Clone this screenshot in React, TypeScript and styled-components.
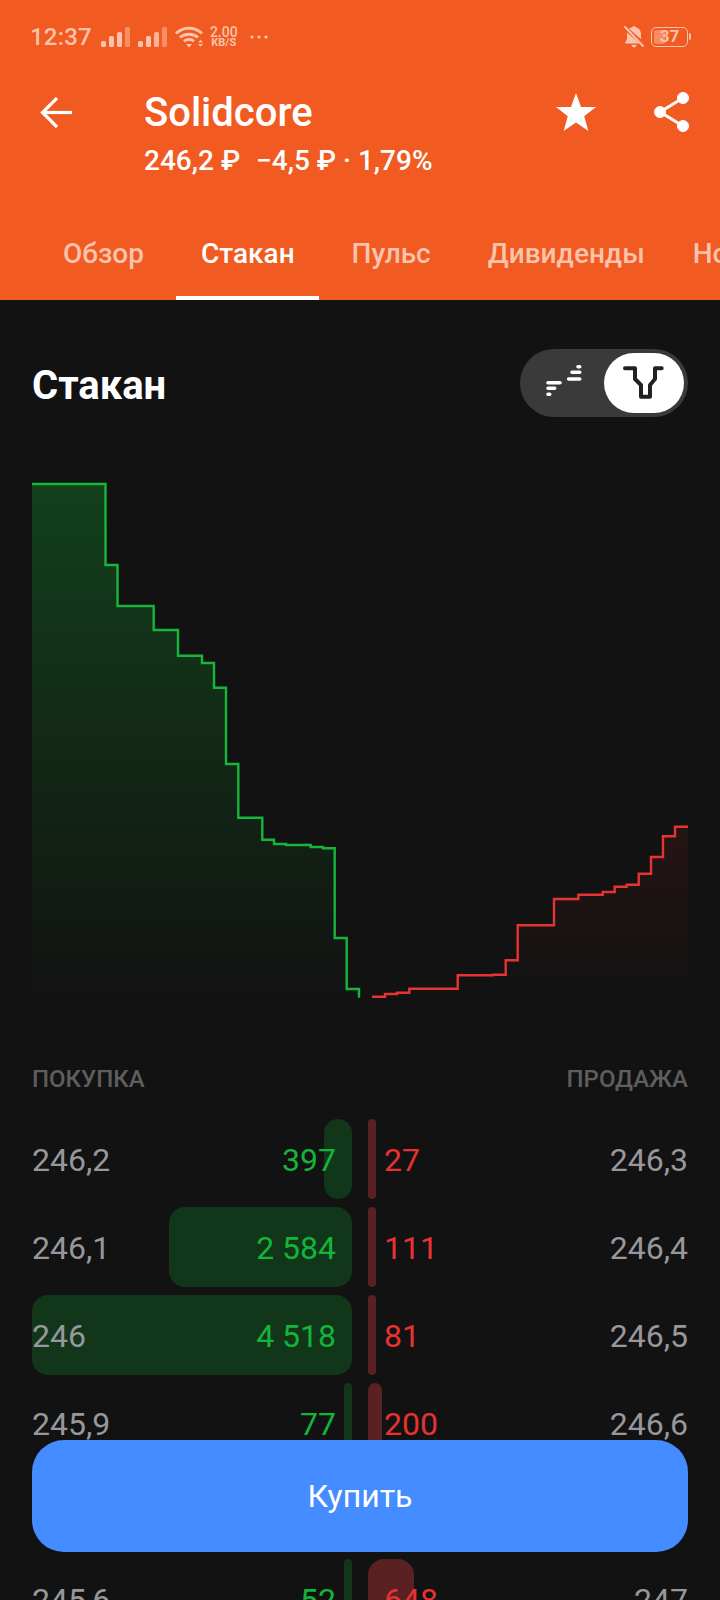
import React from "react";
import styled, { createGlobalStyle } from "styled-components";

const Global = createGlobalStyle`
  html, body { margin: 0; padding: 0; background: #121212; overflow: hidden; height: 1600px; }
  * { box-sizing: border-box; }
`;

const Screen = styled.div`
  position: relative;
  width: 720px;
  height: 1600px;
  overflow: hidden;
  background: #121212;
  font-family: Roboto, "Noto Sans", sans-serif;
`;

const Head = styled.header`
  background: #f15a20;
  height: 300px;
  display: flex;
  flex-direction: column;
`;

const StatusBar = styled.div`
  height: 70px;
  padding: 3px 32px 0 30px;
  display: flex;
  align-items: center;
  color: #fbc3ab;
`;

const Time = styled.span`
  font-size: 24px;
  font-weight: 500;
  margin-right: 9px;
  letter-spacing: 0.2px;
`;

const StatusIcon = styled.svg<{ $mr?: number }>`
  display: block;
  flex: none;
  margin-right: ${(p) => p.$mr ?? 0}px;
`;

const Speed = styled.span`
  display: flex;
  flex-direction: column;
  align-items: center;
  font-size: 14px;
  line-height: 12px;
  font-weight: 500;
  margin: 0 11px 0 6px;
  & > small { font-size: 11px; line-height: 10px; font-weight: 700; }
`;

const Spacer = styled.div`
  flex: 1;
`;

const Battery = styled.div`
  position: relative;
  width: 37px;
  height: 20px;
  border: 1.5px solid #fbc3ab;
  border-radius: 5px;
  margin-left: 7px;
  display: flex;
  align-items: center;
  justify-content: center;
  font-size: 17px;
  font-weight: 700;
  line-height: 1;
  &::before {
    content: "";
    position: absolute;
    left: 2px;
    top: 2px;
    bottom: 2px;
    width: 11px;
    border-radius: 2px;
    background: #f98a62;
  }
  &::after {
    content: "";
    position: absolute;
    right: -4px;
    top: 5px;
    width: 2px;
    height: 7px;
    border-radius: 0 2px 2px 0;
    background: #fbc3ab;
  }
`;

const BatteryLevel = styled.span`
  position: relative;
`;

const TitleBar = styled.div`
  display: flex;
  align-items: flex-start;
  padding: 19px 30px 0 40px;
  height: 140px;
`;

const BackIcon = styled.svg`
  flex: none;
  margin: 8px 72px 0 0;
`;

const TitleBlock = styled.div`
  flex: 1;
  color: #fff;
`;

const Title = styled.div`
  font-size: 40px;
  font-weight: 500;
  line-height: 46px;
  margin-top: 1px;
`;

const Sub = styled.div`
  font-size: 28px;
  font-weight: 500;
  line-height: 34px;
  margin-top: 8px;
  white-space: pre;
`;

const Change = styled.span`
  margin-left: 2px;
`;

const ActionIcon = styled.svg<{ $ml?: number }>`
  flex: none;
  margin-top: 3px;
  margin-left: ${(p) => p.$ml ?? 0}px;
`;

const Tabs = styled.nav`
  display: flex;
  gap: 8px;
  padding-left: 38.5px;
  height: 90px;
  overflow: hidden;
`;

const Tab = styled.div<{ $active?: boolean }>`
  flex: none;
  padding: 27px 24.5px 0;
  height: 90px;
  line-height: 34px;
  font-size: 28px;
  font-weight: 500;
  color: ${(p) => (p.$active ? "#fff" : "#fbc3ab")};
  border-bottom: 4px solid ${(p) => (p.$active ? "#fff" : "transparent")};
  white-space: nowrap;
  &:last-child { margin-left: -9px; }
`;

const SectionHead = styled.div`
  display: flex;
  align-items: flex-start;
  justify-content: space-between;
  padding: 49px 32px 0;
  height: 117px;
`;

const SectionTitle = styled.h2`
  margin: 3px 0 0;
  font-size: 40px;
  font-weight: 700;
  color: #fff;
  line-height: 68px;
`;

const Toggle = styled.div`
  width: 168px;
  height: 68px;
  border-radius: 34px;
  background: #3a3a3a;
  padding: 4px;
  display: flex;
  align-items: center;
`;

const ToggleSlot = styled.div<{ $on?: boolean }>`
  width: 80px;
  height: 60px;
  border-radius: 30px;
  display: flex;
  align-items: center;
  justify-content: center;
  background: ${(p) => (p.$on ? "#fff" : "transparent")};
  &:last-child { margin-left: auto; }
`;

const Chart = styled.svg`
  display: block;
`;

const Sides = styled.div`
  display: flex;
  justify-content: space-between;
  padding: 0 32px;
  margin-top: 47px;
  height: 30px;
  align-items: center;
  font-size: 24px;
  font-weight: 500;
  color: #5e5e60;
`;

const Book = styled.div`
  display: flex;
  flex-direction: column;
  gap: 8px;
  padding: 0 32px;
  margin-top: 25px;
`;

const Row = styled.div`
  display: grid;
  grid-template-columns: 320px 320px;
  grid-template-rows: 80px;
  column-gap: 16px;
  height: 80px;
  font-size: 32px;
  line-height: 82px;
`;

const Half = styled.div<{ $dir: "buy" | "sell" }>`
  position: relative;
  display: flex;
  justify-content: space-between;
  flex-direction: ${(p) => (p.$dir === "buy" ? "row" : "row-reverse")};
`;

const Bar = styled.div<{ $dir: "buy" | "sell" }>`
  position: absolute;
  top: 0;
  bottom: 0;
  ${(p) => (p.$dir === "buy" ? "right: 0;" : "left: 0;")}
  border-radius: 16px;
  background: ${(p) => (p.$dir === "buy" ? "#12361a" : "#5a2123")};
`;

const Price = styled.span`
  position: relative;
  color: #97979c;
`;

const Volume = styled.span<{ $dir: "buy" | "sell" }>`
  position: relative;
  color: ${(p) => (p.$dir === "buy" ? "#12b53a" : "#e83232")};
  ${(p) => (p.$dir === "buy" ? "padding-right: 16px;" : "padding-left: 16px;")}
`;

const BuyButton = styled.button`
  position: absolute;
  left: 32px;
  right: 32px;
  top: 1440px;
  height: 112px;
  border: 0;
  border-radius: 32px;
  background: #448cff;
  color: #fff;
  font-family: inherit;
  font-size: 32px;
  font-weight: 400;
`;

const rows = [
  { bp: "246,2", bv: "397", bw: 28, sv: "27", sw: 8, sp: "246,3" },
  { bp: "246,1", bv: "2 584", bw: 183, sv: "111", sw: 8, sp: "246,4" },
  { bp: "246", bv: "4 518", bw: 320, sv: "81", sw: 8, sp: "246,5" },
  { bp: "245,9", bv: "77", bw: 8, sv: "200", sw: 14, sp: "246,6" },
  { bp: "245,7", bv: "60", bw: 8, sv: "90", sw: 8, sp: "246,8" },
  { bp: "245,6", bv: "52", bw: 8, sv: "648", sw: 46, sp: "247" },
];

const greenPts =
  "32,484 105.5,484 105.5,565 117.5,565 117.5,606 153.7,606 153.7,630 178,630 178,655.7 202,655.7 202,663 214,663 214,687.7 226,687.7 226,764 238.3,764 238.3,817.7 262.3,817.7 262.3,839.7 274,839.7 274,844 286,844 286,845 310.7,845 310.7,847 323,847 323,848.3 334.7,848.3 334.7,938 346.7,938 346.7,989 359,989 359,997.7";
const redPts =
  "372,996.7 385,996.7 385,994 397,994 397,992.7 409.3,992.7 409.3,988.7 457.7,988.7 457.7,975.3 493,975.3 493,974.7 505.7,974.7 505.7,960.3 517.7,960.3 517.7,925.3 554,925.3 554,899 578.3,899 578.3,894.7 602.7,894.7 602.7,892 614.7,892 614.7,886.7 626.7,886.7 626.7,884.7 638.7,884.7 638.7,873.7 651,873.7 651,857 663,857 663,836.3 675,836.3 675,826.7 688,826.7";

const CHART_TOP = 417;

const Signal = ({ third }: { third: number }) => (
  <StatusIcon width="30" height="22" viewBox="0 0 30 22" $mr={7} fill="#fbc3ab">
    <rect x="0" y="15" width="5" height="6" rx="1.5" />
    <rect x="8" y="10" width="5" height="11" rx="1.5" />
    <rect x="16" y="6" width="5" height="15" rx="1.5" opacity={third} />
    <rect x="24" y="1" width="5" height="20" rx="1.5" opacity="0.5" />
  </StatusIcon>
);

export default function App() {
  return (
    <Screen>
      <Global />
      <Head>
        <StatusBar>
          <Time>12:37</Time>
          <Signal third={1} />
          <Signal third={0.85} />
          <StatusIcon width="29" height="22" viewBox="0 0 29 22">
            <g fill="none" stroke="#fbc3ab" strokeWidth="3" strokeLinecap="butt">
              <path d="M1 7.5C8 0.5 20 0.5 27 7.5" />
              <path d="M5 11.5C10 7 18 7 23 11.5" />
              <path d="M9 15.3C11.5 13 16.5 13 19 15.3" />
            </g>
            <path d="M11 18H17L14 21.5Z" fill="#fbc3ab" />
            <path d="M23 16.5h5l-2.5-2.8zM23 18h5l-2.5 2.8z" fill="#fbc3ab" />
          </StatusIcon>
          <Speed>
            2.00
            <small>KB/S</small>
          </Speed>
          <StatusIcon width="20" height="6" viewBox="0 0 20 6" fill="#fbc3ab">
            <circle cx="3" cy="3" r="1.6" />
            <circle cx="10" cy="3" r="1.6" />
            <circle cx="17" cy="3" r="1.6" />
          </StatusIcon>
          <Spacer />
          <StatusIcon width="20" height="22" viewBox="0 0 20 22" fill="#fbc3ab">
            <path d="M3 6.5 15.6 17.5H2C1 17.5 0.7 16.4 1.5 15.7 2.6 14.6 3 13.5 3 11.5ZM5 2.7C6 1.8 7.3 1.3 8.5 1.2 8.6.4 9.3 0 10 0 10.7 0 11.4.4 11.5 1.2 14.8 1.8 17 4.6 17 8V11.5C17 12.3 17.1 13 17.3 13.6ZM7.5 18.8H12.5C12.4 20.3 11.3 21.4 10 21.4 8.7 21.4 7.6 20.3 7.5 18.8Z" />
            <path d="M1 1 19 20" stroke="#fbc3ab" strokeWidth="2" strokeLinecap="round" />
          </StatusIcon>
          <Battery>
            <BatteryLevel>37</BatteryLevel>
          </Battery>
        </StatusBar>
        <TitleBar>
          <BackIcon width="32" height="32" viewBox="0 0 32 32" fill="none" stroke="#fff" strokeWidth="3.2">
            <path d="M32 15.5H3" />
            <path d="M17 1 2.5 15.5 17 30" />
          </BackIcon>
          <TitleBlock>
            <Title>Solidcore</Title>
            <Sub>
              246,2 ₽  <Change>−4,5 ₽ · 1,79%</Change>
            </Sub>
          </TitleBlock>
          <ActionIcon width="40" height="40" viewBox="0 0 40 40" fill="#fff">
            <path d="M20 1 25 15H40L28.2 24.2 32.4 39 20 30.4 7.6 39 11.8 24.2 0 15H15Z" />
          </ActionIcon>
          <ActionIcon width="36" height="40" viewBox="0 0 36 40" $ml={58} fill="#fff" stroke="#fff">
            <path d="M29 6 6 20 29 34" fill="none" strokeWidth="3" />
            <circle cx="29" cy="6" r="5.5" strokeWidth="1" />
            <circle cx="6" cy="20" r="5.5" strokeWidth="1" />
            <circle cx="29" cy="34" r="5.5" strokeWidth="1" />
          </ActionIcon>
        </TitleBar>
        <Tabs>
          <Tab>Обзор</Tab>
          <Tab $active>Стакан</Tab>
          <Tab>Пульс</Tab>
          <Tab>Дивиденды</Tab>
          <Tab>Новости</Tab>
        </Tabs>
      </Head>
      <SectionHead>
        <SectionTitle>Стакан</SectionTitle>
        <Toggle>
          <ToggleSlot>
            <svg width="60" height="50" viewBox="0 0 60 50" fill="none" stroke="#fff" strokeWidth="3.6" strokeLinecap="round">
              <path d="M14 24.7H26M14 30.3H20.7M14 36.3H15.7M34.7 21H45.7M38 14.3H45.7M44 8.7H45.7" />
            </svg>
          </ToggleSlot>
          <ToggleSlot $on>
            <svg width="48" height="40" viewBox="0 0 48 40" fill="none" stroke="#222" strokeWidth="4" strokeLinecap="round" strokeLinejoin="round">
              <path d="M5 5.3H15V16L21 22V33.7H30V22L35 16V5.3H41.7" />
            </svg>
          </ToggleSlot>
        </Toggle>
      </SectionHead>
      <Chart width="720" height="600" viewBox={`0 ${CHART_TOP} 720 600`}>
        <defs>
          <linearGradient id="g" x1="0" y1="484" x2="0" y2="1000" gradientUnits="userSpaceOnUse">
            <stop offset="0" stopColor="#12401b" />
            <stop offset="1" stopColor="#12401b" stopOpacity="0" />
          </linearGradient>
          <linearGradient id="r" x1="0" y1="827" x2="0" y2="990" gradientUnits="userSpaceOnUse">
            <stop offset="0" stopColor="#3a1616" stopOpacity="0.5" />
            <stop offset="1" stopColor="#3a1616" stopOpacity="0" />
          </linearGradient>
        </defs>
        <polygon points={`${greenPts} 359,1000 32,1000`} fill="url(#g)" />
        <polygon points={`${redPts} 688,1000 372,1000`} fill="url(#r)" />
        <polyline points={greenPts} fill="none" stroke="#16b53c" strokeWidth="2.4" />
        <polyline points={redPts} fill="none" stroke="#e63333" strokeWidth="2.4" />
      </Chart>
      <Sides>
        <span>ПОКУПКА</span>
        <span>ПРОДАЖА</span>
      </Sides>
      <Book>
        {rows.map((r) => (
          <Row key={r.bp}>
            <Half $dir="buy">
              <Bar $dir="buy" style={{ width: r.bw }} />
              <Price>{r.bp}</Price>
              <Volume $dir="buy">{r.bv}</Volume>
            </Half>
            <Half $dir="sell">
              <Bar $dir="sell" style={{ width: r.sw }} />
              <Price>{r.sp}</Price>
              <Volume $dir="sell">{r.sv}</Volume>
            </Half>
          </Row>
        ))}
      </Book>
      <BuyButton>Купить</BuyButton>
    </Screen>
  );
}
